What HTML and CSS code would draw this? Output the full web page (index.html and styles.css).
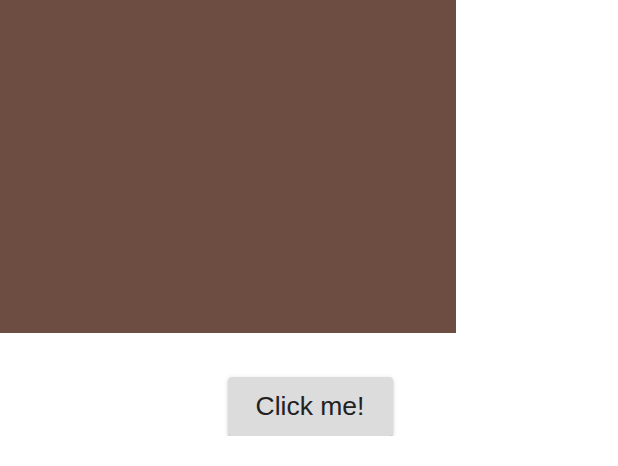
FILE: index.html
```html
<!DOCTYPE html>
<html>
<head>
<meta charset="utf-8">
<link rel="stylesheet" href="styles.css">
</head>
<body>
<div class="page">
  <div class="canvas"></div>
  <button class="btn">Click me!</button>
</div>
</body>
</html>
```
FILE: styles.css
```css
html, body { margin: 0; padding: 0; background: #fff; }
.page {
  display: flex;
  flex-direction: column;
  align-items: center;
  width: 618px;
}
.canvas {
  align-self: flex-start;
  width: 456px;
  height: 333px;
  background: #6d4c41;
}
.btn {
  margin: 44px 0 0 2px;
  width: 165px;
  height: 59px;
  padding: 0;
  border: none;
  border-radius: 4px;
  background: #dcdcdc;
  color: #222;
  font-family: "Liberation Sans", Arial, sans-serif;
  font-size: 26.5px;
  box-shadow: 0 3px 1px -2px rgba(0,0,0,.22), 0 2px 2px 0 rgba(0,0,0,.16), 0 1px 5px 0 rgba(0,0,0,.14);
}
```
